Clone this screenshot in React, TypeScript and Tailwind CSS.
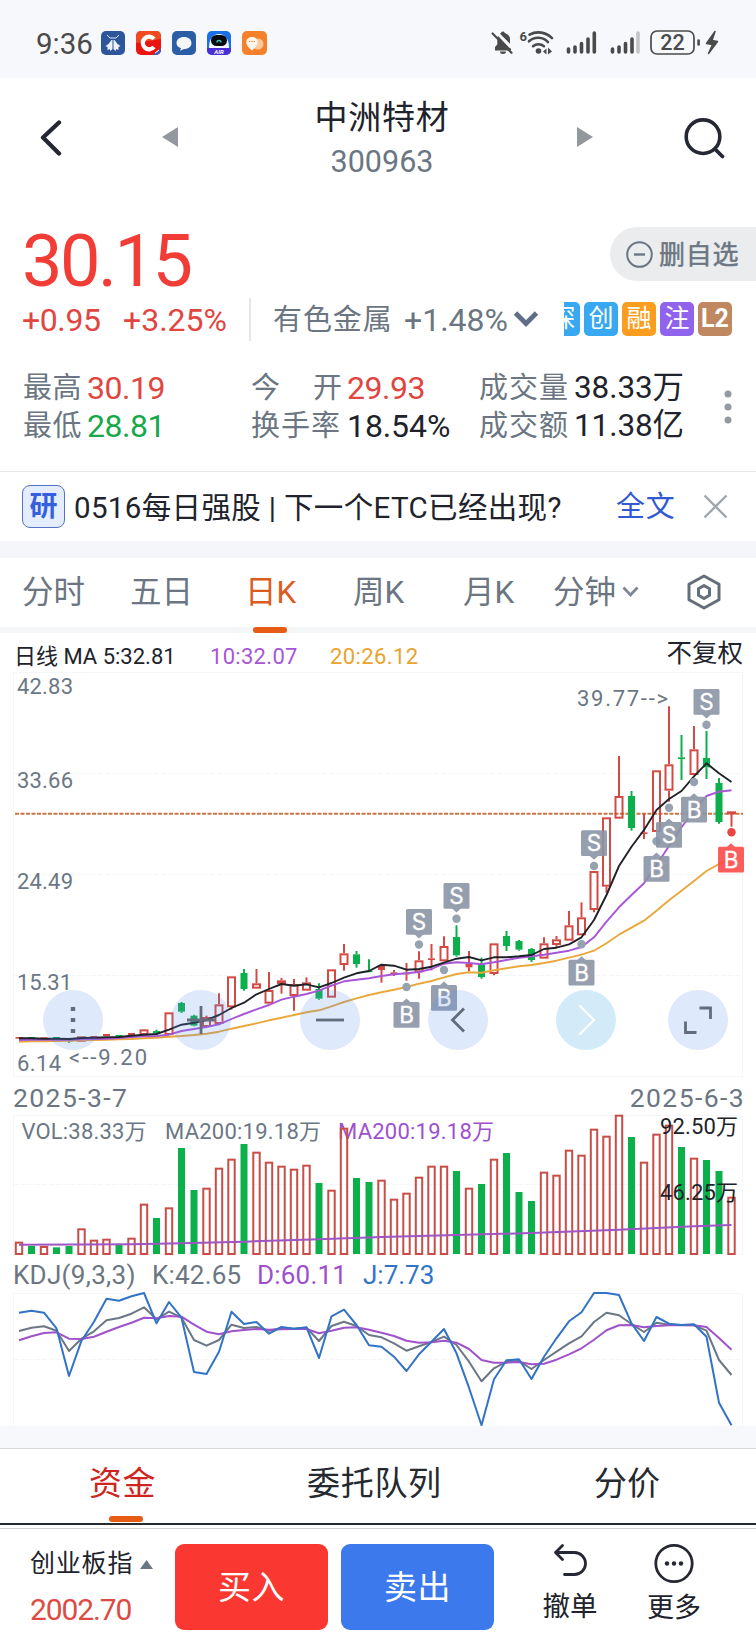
import React from "react";

const FIRST_X = 19;
const STEP = 12.5;
const RED = "#d24a43";
const GREEN = "#0bb04a";
const xAt = (i: number) => FIRST_X + STEP * i;

// index: colour, body top, body bottom, high, low (thirds of a pixel below the price axis origin)
type Candle = ["r" | "g" | "f", number, number, number, number];
const candles: Candle[] = [
  ["f", 1131, 1136, 1131, 1136], ["g", 1131, 1135, 1131, 1135], ["f", 1132, 1136, 1132, 1136], ["g", 1131, 1135, 1131, 1135],
  ["g", 1138, 1144, 1138, 1148], ["r", 1129, 1145, 1129, 1145], ["f", 1128, 1133, 1128, 1133], ["f", 1122, 1128, 1122, 1128],
  ["g", 1125, 1130, 1125, 1130], ["f", 1119, 1126, 1119, 1126], ["r", 1108, 1125, 1108, 1125], ["g", 1113, 1121, 1109, 1125],
  ["r", 1057, 1125, 1057, 1125], ["g", 1029, 1055, 1026, 1059], ["g", 1067, 1097, 1064, 1099], ["r", 1071, 1101, 1067, 1101],
  ["r", 1033, 1092, 1000, 1092], ["r", 949, 1042, 949, 1049], ["g", 939, 987, 927, 992], ["r", 970, 986, 927, 986],
  ["r", 990, 1031, 936, 1031], ["r", 961, 972, 954, 1001], ["r", 972, 1008, 957, 1052], ["r", 967, 992, 952, 992],
  ["g", 987, 1016, 970, 1019], ["r", 928, 1013, 928, 1013], ["r", 880, 915, 852, 932], ["g", 883, 912, 873, 923],
  ["g", 932, 936, 898, 936], ["f", 916, 930, 914, 968], ["f", 937, 943, 930, 948], ["f", 938, 943, 909, 962],
  ["r", 901, 937, 874, 956], ["f", 895, 900, 852, 931], ["r", 858, 904, 829, 904], ["g", 831, 886, 796, 890],
  ["f", 912, 922, 873, 934], ["g", 914, 951, 893, 956], ["r", 850, 942, 850, 946], ["g", 828, 858, 813, 873],
  ["g", 843, 869, 840, 872], ["g", 867, 900, 864, 906], ["r", 850, 896, 832, 896], ["r", 838, 855, 828, 862],
  ["r", 796, 842, 753, 842], ["r", 772, 826, 727, 826], ["r", 633, 750, 633, 757], ["r", 472, 680, 472, 698],
  ["r", 408, 476, 288, 476], ["g", 408, 504, 393, 512], ["f", 517, 522, 461, 537], ["r", 331, 516, 331, 516],
  ["r", 313, 392, 139, 425], ["g", 292, 297, 225, 360], ["r", 268, 345, 198, 345], ["g", 294, 322, 213, 357],
  ["g", 369, 486, 354, 491], ["f", 454, 463, 454, 500],
];

const ma5 = [1135, 1135, 1136, 1136, 1137, 1134, 1133, 1132, 1131, 1127, 1124, 1122, 1109, 1094, 1088, 1080, 1065, 1044, 1028, 1003, 987, 972, 977, 973, 982, 969, 953, 940, 933, 914, 917, 929, 927, 920, 908, 896, 891, 901, 892, 892, 889, 885, 867, 863, 853, 832, 780, 705, 618, 560, 510, 450, 417, 393, 349, 310, 340, 366];
const ma10 = [1140, 1139, 1139, 1139, 1139, 1138, 1137, 1136, 1134, 1131, 1129, 1128, 1124, 1113, 1107, 1101, 1093, 1077, 1062, 1048, 1035, 1019, 1010, 1002, 992, 977, 964, 959, 955, 948, 943, 940, 936, 927, 911, 907, 909, 913, 907, 900, 893, 889, 884, 878, 872, 861, 832, 785, 742, 705, 670, 615, 558, 502, 452, 408, 395, 391];
const ma20 = [1145, 1144, 1144, 1143, 1142, 1141, 1140, 1139, 1138, 1137, 1135, 1133, 1130, 1128, 1125, 1121, 1115, 1106, 1098, 1090, 1081, 1073, 1065, 1057, 1051, 1039, 1026, 1015, 1005, 997, 989, 981, 971, 963, 952, 942, 937, 938, 931, 925, 919, 915, 909, 902, 893, 884, 872, 850, 824, 803, 782, 752, 721, 692, 663, 633, 612, 598];

const volume = [455, 468, 468, 472, 468, 415, 449, 446, 462, 443, 341, 384, 352, 174, 300, 293, 233, 206, 162, 185, 215, 227, 236, 224, 279, 299, 113, 264, 276, 269, 326, 308, 260, 227, 227, 243, 293, 282, 206, 189, 306, 333, 245, 254, 179, 194, 116, 137, 74, 141, 215, 131, 104, 171, 203, 210, 243, 320];
const greens = [1, 3, 4, 8, 11, 13, 14, 18, 24, 27, 28, 35, 37, 39, 40, 41, 49, 53, 55, 56];

const lineJ = [668, 662, 668, 715, 858, 752, 695, 626, 632, 619, 609, 700, 636, 683, 846, 852, 785, 665, 702, 696, 731, 711, 716, 712, 804, 679, 659, 705, 766, 770, 800, 843, 793, 755, 717, 790, 893, 1006, 868, 811, 808, 867, 800, 745, 694, 667, 609, 609, 615, 700, 753, 681, 701, 705, 703, 740, 938, 1006];
const lineK = [723, 713, 709, 722, 783, 746, 724, 691, 684, 671, 652, 688, 665, 683, 750, 767, 750, 704, 714, 711, 722, 714, 716, 713, 753, 708, 695, 708, 735, 742, 760, 782, 769, 756, 740, 765, 815, 874, 835, 815, 813, 837, 810, 785, 760, 739, 696, 668, 676, 702, 726, 698, 704, 705, 706, 722, 810, 855];
const lineD = [751, 739, 729, 727, 746, 747, 740, 725, 711, 698, 683, 685, 678, 680, 704, 725, 733, 724, 720, 717, 719, 718, 717, 717, 730, 722, 713, 712, 719, 728, 738, 752, 758, 757, 752, 758, 777, 810, 818, 818, 816, 823, 821, 809, 793, 775, 749, 721, 706, 705, 712, 708, 706, 706, 706, 711, 744, 779];

const poly = (values: number[], base: number) =>
  values.map((v, i) => `${xAt(i)},${(base + v / 3).toFixed(1)}`).join(" ");

const markers: { i: number; t: "S" | "B"; box: number; dot: number; hot?: boolean }[] = [
  { i: 32, t: "S", box: 909, dot: 944.5 },
  { i: 35, t: "S", box: 883, dot: 918.7 },
  { i: 46, t: "S", box: 830.3, dot: 866 },
  { i: 55, t: "S", box: 689, dot: 724.7 },
  { i: 31, t: "B", box: 1002, dot: 987 },
  { i: 34, t: "B", box: 985, dot: 970 },
  { i: 45, t: "B", box: 959.7, dot: 944.3 },
  { i: 51, t: "B", box: 856, dot: 841.3 },
  { i: 52, t: "S", box: 822, dot: 807.7 },
  { i: 54, t: "B", box: 796.7, dot: 782 },
  { i: 57, t: "B", box: 846.7, dot: 832.3, hot: true },
];

function Label({ x, y, w, fill = "#6b7785", children }: { x: number; y: number; w: number; fill?: string; children: string }) {
  return (
    <text x={x} y={y} textLength={w} lengthAdjust="spacing" fontSize="22" fill={fill}>
      {children}
    </text>
  );
}

function PriceChart() {
  return (
    <svg className="block" width="756" height="405" viewBox="0 672 756 405">
      <rect x="13.5" y="672.5" width="729" height="404" fill="none" stroke="#f5f6f7" />
      {[773.5, 874.5, 975.5].map((y) => (
        <line key={y} x1="14" x2="742" y1={y} y2={y} stroke="#f5f6f7" strokeDasharray="5 2" />
      ))}
      <line x1="15" x2="743" y1="813.8" y2="813.8" stroke="#cb7444" strokeWidth="2" strokeDasharray="4 1.5" />
      {candles.map(([c, top, bottom, high, low], i) => {
        const x = xAt(i);
        const t = 660 + top / 3;
        const b = 660 + bottom / 3;
        const last = i === candles.length - 1;
        const half = last ? 4.5 : 3.5;
        const color = c === "g" ? GREEN : RED;
        return (
          <g key={i} stroke={color} strokeWidth="2">
            {high < top && <line x1={x} x2={x} y1={660 + high / 3} y2={t} />}
            {low > bottom && <line x1={x} x2={x} y1={b} y2={660 + low / 3} />}
            {c === "r" ? (
              <rect x={x - 3.5} y={t + 1} width="7" height={Math.max(1, b - t - 2)} fill="none" />
            ) : (
              <rect x={x - half} y={t} width={half * 2} height={Math.max(1.6, b - t)} fill={color} stroke="none" />
            )}
          </g>
        );
      })}
      <g fill="none" strokeWidth="1.9" strokeLinejoin="round">
        <polyline points={poly(ma20, 660)} stroke="#e9a83a" />
        <polyline points={poly(ma10, 660)} stroke="#a855d8" />
        <polyline points={poly(ma5, 660)} stroke="#20222a" />
      </g>
      {markers.map(({ i, t, box, dot, hot }) => {
        const x = xAt(i);
        const cx = hot ? 731 : x;
        const tip = dot > box ? box + 29.5 : box - 3.5;
        const edge = dot > box ? box + 25 : box + 1;
        const fill = hot ? "#fb4c4c" : "#8a95a6";
        return (
          <g key={i}>
            <circle cx={x} cy={dot} r="4.2" fill={hot ? "#e94440" : "#97a2b1"} />
            <g opacity="0.9" fill={fill}>
              <path d={`M${cx - 5} ${edge}L${cx} ${tip}L${cx + 5} ${edge}z`} />
              <rect x={cx - 13} y={box} width="26" height="25.8" rx="1.5" />
            </g>
            <text x={cx} y={box + 20.8} fontSize="22.500" fontFamily="Inter" textAnchor="middle" fill="#fff" stroke="#fff" strokeWidth="0.3">
              {t}
            </text>
          </g>
        );
      })}
      <Label x={17} y={694} w={56}>42.83</Label>
      <Label x={17} y={787.5} w={56}>33.66</Label>
      <Label x={17} y={889} w={56}>24.49</Label>
      <Label x={17} y={990} w={55}>15.31</Label>
      <Label x={17} y={1071} w={44}>6.14</Label>
      <Label x={577} y={706} w={91}>39.77--&gt;</Label>
      <Label x={69} y={1065} w={78}>&lt;--9.20</Label>
      <g fill="#5b92f0" fillOpacity="0.2">
        <circle cx="73" cy="1020" r="30" />
        <circle cx="201" cy="1020" r="30" />
        <circle cx="330" cy="1020" r="30" />
        <circle cx="458" cy="1020" r="30" />
        <circle cx="586" cy="1020" r="30" fill="#2299e0" />
        <circle cx="698" cy="1020" r="30" />
      </g>
      <g fill="none" stroke="#636c7a" strokeWidth="2.8">
        <path d="M73 1007v4M73 1018v4M73 1029v4" strokeWidth="4.4" />
        <path d="M201 1006v28M187 1020h28" />
        <path d="M316 1020h28" />
        <path d="M464 1008.5l-11.5 11.5l11.5 11.5" />
        <path d="M579.5 1005.5l14.5 14.5l-14.5 14.5" stroke="#fff" strokeWidth="2" />
        <path d="M699.5 1008h11v11M685.500 1021.500v11h11" />
      </g>
    </svg>
  );
}

function VolumeChart() {
  return (
    <svg className="block" width="756" height="143" viewBox="0 1113 756 143">
      <path d="M13.500 1115.500H742.500V1254.500H13.500z" fill="none" stroke="#f5f6f7" />
      <line x1="14" x2="742" y1="1184.500" y2="1184.500" stroke="#f5f6f7" strokeDasharray="5 2" />
      <Label x={21.5} y={1139} w={125}>VOL:38.33万</Label>
      <Label x={165} y={1139} w={156}>MA200:19.18万</Label>
      <Label x={338} y={1139} w={156} fill="#a04fcf">MA200:19.18万</Label>
      {volume.map((v, i) => {
        const x = xAt(i);
        const top = 1090 + v / 3;
        return greens.includes(i) ? (
          <rect key={i} x={x - 3.5} y={top} width="7" height={1254 - top} fill={GREEN} />
        ) : (
          <rect key={i} x={x - 3.2} y={top + 1} width="6.4" height={1253 - top} fill="none" stroke="#c84d46" strokeWidth="2" />
        );
      })}
      <polyline
        fill="none"
        stroke="#a055c4"
        strokeWidth="2"
        points={[[0, 464], [9, 463], [13, 460], [18, 455], [24, 448], [29, 441], [35, 435], [41, 429], [48, 419], [54, 409], [57, 405]]
          .map(([i, v]) => `${xAt(i)},${1090 + v / 3}`)
          .join(" ")}
      />
      <Label x={660} y={1134} w={78} fill="#20222a">92.50万</Label>
      <Label x={660} y={1200} w={78} fill="#20222a">46.25万</Label>
    </svg>
  );
}

function KdjChart() {
  return (
    <svg className="block" width="756" height="134" viewBox="0 1292 756 134">
      <path d="M13.500 1425.500V1293.500H742.500V1425.500" fill="none" stroke="#f5f6f7" />
      <line x1="14" x2="742" y1="1359.500" y2="1359.500" stroke="#f5f6f7" strokeDasharray="5 2" />
      <g fill="none" strokeWidth="2" strokeLinejoin="round">
        <polyline points={poly(lineK, 1090)} stroke="#6b7785" />
        <polyline points={poly(lineD, 1090)} stroke="#a052cb" />
        <polyline points={poly(lineJ, 1090)} stroke="#3273c6" />
      </g>
    </svg>
  );
}

function StatusBar() {
  return (
    <header className="flex h-[78px] items-center bg-[#f7f8fb] pt-2 pl-[36px] text-[#4a4a4a]">
      <span className="w-[65px] pt-0.5 text-[29.500px]">9:36</span>
      <div className="flex gap-[11px]">
        <svg width="24" height="24" viewBox="0 0 24 24">
          <rect width="24" height="24" rx="5" fill="#2c559c" />
          <path d="M6 4l3 3h6l3-3" stroke="#dce6f5" fill="none" strokeWidth="1" />
          <path d="M11.500 9v9l-2 2l-1-2l-2 1v-3l-2-1l3-2l3-4zM12.500 9v9l2 2l1-2l2 1v-3l2-1l-3-2l-3-4z" fill="#eef3fb" />
        </svg>
        <svg width="25" height="24" viewBox="0 0 25 24">
          <rect width="25" height="24" rx="5" fill="#ea1410" />
          <path d="M0 12V5a5 5 0 0 1 5-5h15a5 5 0 0 1 5 5v3z" fill="#f04a20" />
          <path d="M18 8a6.300 6.300 0 1 0 0 8" stroke="#fff" strokeWidth="4.200" fill="none" />
          <path d="M25 17v2a5 5 0 0 1-5 5h-3z" fill="#3c62c4" />
          <path d="M19 22l4-3" stroke="#fff" />
        </svg>
        <svg width="24" height="24" viewBox="0 0 24 24">
          <rect width="24" height="24" rx="5" fill="#2c5ea6" />
          <path d="M12 6c4.500 0 7.500 2.600 7.500 6s-3 6-7.500 6l-4 1.800l1-2.500C6 16.200 4.500 14.400 4.500 12c0-3.400 3-6 7.500-6z" fill="#f3f5f7" />
        </svg>
        <svg width="24" height="24" viewBox="0 0 24 24">
          <rect width="24" height="24" rx="5" fill="#1b6fe8" />
          <path d="M0 17h24v2a5 5 0 0 1-5 5H5a5 5 0 0 1-5-5z" fill="#4a2fd8" />
          <path d="M2 17C2 8 6 3 12 3s10 5 10 14z" fill="#f4f7fb" />
          <rect x="4" y="4" width="16" height="11" rx="5.500" fill="#06090f" />
          <path d="M10 11.500a2 2 0 0 1 4 0" stroke="#2dd4bf" fill="none" strokeWidth="1.300" />
          <text x="12" y="23" fontSize="6" fontWeight="700" fontStyle="italic" textAnchor="middle" fill="#fff">AIR</text>
        </svg>
        <svg width="25" height="24" viewBox="0 0 25 24">
          <rect width="25" height="24" rx="5" fill="#f5802a" />
          <circle cx="16" cy="13" r="5.500" fill="#fbc79b" />
          <path d="M10 6c3.500 0 5.700 2.200 5.700 5.200c0 3.300-3 5.800-5.700 8.300c-2.700-2.500-5.700-5-5.700-8.300C4.300 8.200 6.500 6 10 6z" fill="#fff4ea" />
          <path d="M7 10.500h6" stroke="#f5802a" strokeDasharray="1.300 1" />
        </svg>
      </div>
      <svg className="ml-[221px]" width="232" height="28" viewBox="488 29 232 28">
        <g fill="#4a4a4a">
          <path d="M495 49v-2l2.300-2.600V39a6 6 0 0 1 .8-3L511 49.500zM500 33.700a3 3 0 0 1 1-.7a2 2 0 0 1 3.800 0c3.200.9 5.200 3.300 5.200 6.500v4.200z" />
          <path d="M495 48.500h16v2h-16zM500 51.500h6a3 2.500 0 0 1-6 0z" />
          <path d="M492.600 33.500L511.500 52.800" stroke="#4a4a4a" strokeWidth="2.200" strokeLinecap="round" />
          <text x="519.500" y="41" fontSize="13" fontWeight="700">6</text>
          <circle cx="538.500" cy="51" r="2.800" />
          <path d="M543 51.500l3.500-3v6zM552 51.500l-4-4v7z" />
        </g>
        <g fill="none" stroke="#4a4a4a" strokeWidth="2.600" strokeLinecap="round">
          <path d="M529.500 34.600a19 19 0 0 1 22.500 3.500" />
          <path d="M529 41.300a13.500 13.500 0 0 1 19 .8" />
          <path d="M533 46.200a8.500 8.500 0 0 1 11 0" />
        </g>
        <g stroke="#4a4a4a" strokeWidth="3.600" strokeLinecap="round">
          <path d="M568.500 49v3M575 47v5M581.500 43.500v8.500M588 39v13M594.300 33v19" />
          <path d="M612.500 49v3M619 47v5M625.500 43.500v8.500M632 39v13" />
          <path d="M638 33v19" stroke="#c4c4c6" />
          <path d="M698.600 40.500v4" strokeWidth="2.600" />
        </g>
        <rect x="651" y="31" width="43" height="23" rx="6" fill="none" stroke="#4a4a4a" strokeWidth="1.700" />
        <text x="672.500" y="50" fontSize="21.500" fontWeight="500" textAnchor="middle" fill="#4a4a4a">22</text>
        <path d="M715 31.500L706.500 43.500l6 1L708.500 53.500L717.500 41.500l-5.500-1z" fill="#4a4a4a" stroke="#4a4a4a" strokeWidth="1.500" strokeLinejoin="round" />
      </svg>
    </header>
  );
}

function TitleBar() {
  return (
    <div className="flex h-[132px] items-start">
      <svg className="mt-[40px] ml-[38px]" width="26" height="38" viewBox="38 118 26 38">
        <path d="M59 122.500L43 137.500L59 153.500" fill="none" stroke="#252832" strokeWidth="4.300" strokeLinecap="round" strokeLinejoin="round" />
      </svg>
      <svg className="mt-[49px] ml-[98px]" width="16" height="20" viewBox="0 0 16 20">
        <path d="M16 0v20L0 10z" fill="#93989e" />
      </svg>
      <div className="ml-[130px] flex w-[148px] flex-col items-center">
        <h1 className="mt-[20px] h-[40px] text-[33px] leading-[40px] tracking-[0.700px] text-[#20232b]">中洲特材</h1>
        <span className="mt-[4px] text-[30.500px] leading-[40px] text-[#6b7682]">300963</span>
      </div>
      <svg className="mt-[49px] ml-[121px]" width="16" height="20" viewBox="0 0 16 20">
        <path d="M0 0v20L16 10z" fill="#93989e" />
      </svg>
      <svg className="mt-[38px] ml-[89px]" width="46" height="46" viewBox="682 116 46 46">
        <circle cx="703" cy="136.700" r="16.800" fill="none" stroke="#252832" strokeWidth="3.600" />
        <path d="M715 149l7.500 7.500" stroke="#252832" strokeWidth="3.800" strokeLinecap="round" />
      </svg>
    </div>
  );
}

function Badge({ className, children }: { className: string; children: string }) {
  return (
    <span className={`flex h-[34px] w-[34px] shrink-0 items-center justify-center rounded-[5px] text-[25px] leading-[34px] text-white ${className}`}>
      {children}
    </span>
  );
}

function Quote() {
  return (
    <section className="h-[262px] border-b border-[#e6e7e9] text-[#6b7682]">
      <div className="flex h-[84px] justify-between">
        <span className="pl-[22px] text-[72px] leading-[103px] tracking-[-2.500px] text-[#f23c36]">30.15</span>
        <div className="mt-[17px] flex h-[54px] w-[146px] items-center rounded-l-full bg-[#ebecee] pl-[16px]">
          <svg width="27" height="27" viewBox="0 0 27 27">
            <circle cx="13.500" cy="13.500" r="12.300" fill="none" stroke="#6b7682" strokeWidth="2" />
            <path d="M8 13.500h11" stroke="#6b7682" strokeWidth="2.400" />
          </svg>
          <span className="ml-[6px] pt-0.5 text-[26px] tracking-[0.700px] [-webkit-text-stroke:0.5px_#6b7682]">删自选</span>
        </div>
      </div>
      <div className="flex h-[50px] items-center text-[32px]">
        <span className="w-[101px] pt-0.5 pl-[22px] tracking-[-0.400px] text-[#e0463f]">+0.95</span>
        <span className="ml-[22px] w-[126px] pt-0.5 text-[#e0463f]">+3.25%</span>
        <span className="h-[43px] w-[2px] bg-[#e6e7e9]" />
        <span className="ml-[22px] w-[131px] pt-[3px] text-[29px] tracking-[0.900px]">有色金属</span>
        <span className="w-[109px] pt-0.5">+1.48%</span>
        <svg width="26" height="18" viewBox="0 0 26 18">
          <path d="M2.500 3L13 13.500L23.500 3" fill="none" stroke="#5f6f86" strokeWidth="4.800" />
        </svg>
        <div className="ml-[25px] flex w-[168px] justify-end gap-1 overflow-hidden">
          <Badge className="bg-[#38a8f0]">深</Badge>
          <Badge className="bg-[#38a8f0]">创</Badge>
          <Badge className="bg-[#fb9e20]">融</Badge>
          <Badge className="bg-[#8f63ec]">注</Badge>
          <Badge className="bg-[#c08860] font-bold">L2</Badge>
        </div>
      </div>
      <div className="mt-[25px] flex items-center">
        <div className="grid grid-cols-[64px_164px_96px_132px_95px_130px] pl-[23px] text-[29px] leading-[38px] whitespace-nowrap">
          <span className="tracking-[0.500px]">最高</span>
          <span className="text-[32px] tracking-[-0.500px] text-[#e0463f]">30.19</span>
          <span className="flex w-[91px] justify-between"><span>今</span><span>开</span></span>
          <span className="text-[32px] tracking-[-0.500px] text-[#e0463f]">29.93</span>
          <span className="tracking-[1px]">成交量</span>
          <span className="text-[31.500px] tracking-[-0.100px] text-[#20232b]">38.33万</span>
          <span className="tracking-[0.500px]">最低</span>
          <span className="text-[32px] tracking-[-0.500px] text-[#17a84a]">28.81</span>
          <span className="tracking-[1px]">换手率</span>
          <span className="text-[32px] tracking-[-0.100px] text-[#20232b]">18.54%</span>
          <span className="tracking-[1px]">成交额</span>
          <span className="text-[31.500px] tracking-[-0.100px] text-[#20232b]">11.38亿</span>
        </div>
        <svg className="ml-[19px]" width="10" height="36" viewBox="0 0 10 36">
          <g fill="#949a9f">
            <circle cx="5" cy="5" r="3.500" />
            <circle cx="5" cy="18" r="3.500" />
            <circle cx="5" cy="31" r="3.500" />
          </g>
        </svg>
      </div>
    </section>
  );
}

function NewsRow() {
  return (
    <section className="flex h-[69px] items-center pl-[22px]">
      <span className="flex h-[43px] w-[43px] items-center justify-center rounded-[8px] border border-[#5272c4] bg-[#e4edfd] text-[28px] font-bold text-[#365fe0]">研</span>
      <span className="ml-[9px] w-[542px] pt-[3px] text-[29.500px] tracking-[0.350px] whitespace-nowrap text-[#20232b]">0516每日强股 | 下一个ETC已经出现?</span>
      <span className="pt-[3px] text-[29px] tracking-[0.800px] text-[#3059d2]">全文</span>
      <svg className="ml-[27px]" width="25" height="25" viewBox="0 0 25 25">
        <path d="M1.500 1.500l22 22M23.500 1.500l-22 22" stroke="#a0a6ae" strokeWidth="2.400" />
      </svg>
    </section>
  );
}

function Periods() {
  return (
    <nav className="flex h-[75px] border-b-[6px] border-[#f5f6f8] pl-[22px] text-[31.500px] leading-[70px] text-[#6b7682]">
      <span className="w-[108px]">分时</span>
      <span className="w-[115px]">五日</span>
      <span className="flex h-[75px] w-[108px] flex-col text-[#dc5c20]">
        <span className="h-[69px]">日K</span>
        <span className="ml-[8px] h-[6px] w-[34px] rounded-full bg-[#e75c14]" />
      </span>
      <span className="w-[110px]">周K</span>
      <span className="w-[90px]">月K</span>
      <span>分钟</span>
      <svg className="mt-[27px] ml-[6px]" width="17" height="14" viewBox="0 0 17 14">
        <path d="M1.500 2.500l7 7.500l7-7.500" fill="none" stroke="#7f8995" strokeWidth="2.800" />
      </svg>
      <svg className="mt-[16px] ml-[47px]" width="36" height="36" viewBox="0 0 36 36">
        <path d="M18 2l15 8.200v15.600L18 34L3 25.800V10.200z" fill="none" stroke="#646e7b" strokeWidth="3" strokeLinejoin="round" />
        <path d="M18 11.500l5.500 3.200v6.600L18 24.500l-5.500-3.200v-6.600z" fill="none" stroke="#646e7b" strokeWidth="3" strokeLinejoin="round" />
      </svg>
    </nav>
  );
}

function BottomBar() {
  return (
    <footer className="flex h-[104px] border-t border-[#cfd1d5] text-[#20232b]">
      <div className="w-[175px] pt-[15px] pl-[30px]">
        <div className="flex h-[40px] items-center gap-[7px]">
          <span className="text-[25px] leading-[40px] tracking-[0.800px]">创业板指</span>
          <svg width="13" height="9" viewBox="0 0 13 9">
            <path d="M6.500 0L13 9H0z" fill="#6b7682" />
          </svg>
        </div>
        <div className="mt-[6px] text-[30px] leading-[40px] tracking-[-1.100px] text-[#dc4c45]">2002.70</div>
      </div>
      <button className="mt-[15px] h-[86px] w-[153px] rounded-[9px] bg-[#fa3731] pt-0.5 text-[33px] tracking-[0.500px] text-white">买入</button>
      <button className="mt-[15px] ml-[13px] h-[86px] w-[153px] rounded-[9px] bg-[#3c79ec] pt-0.5 text-[33px] tracking-[0.500px] text-white">卖出</button>
      <div className="ml-[36px] flex w-[80px] flex-col items-center">
        <svg className="mt-[13px]" width="40" height="38" viewBox="551 1543 40 38">
          <path d="M563.500 1546.500L556.500 1553.500L563.500 1560.500M556.500 1553.500H575.500a11 11 0 0 1 0 22H565.500" fill="none" stroke="#252832" strokeWidth="2.800" strokeLinecap="round" strokeLinejoin="round" />
        </svg>
        <span className="mt-[7px] text-[27.500px] leading-[40px]">撤单</span>
      </div>
      <div className="ml-[24px] flex w-[80px] flex-col items-center">
        <svg className="mt-[14px]" width="42" height="42" viewBox="0 0 42 42">
          <circle cx="21" cy="20.500" r="18.200" fill="none" stroke="#252832" strokeWidth="2.800" />
          <circle cx="14" cy="20.500" r="2.200" fill="#252832" />
          <circle cx="21" cy="20.500" r="2.200" fill="#252832" />
          <circle cx="28" cy="20.500" r="2.200" fill="#252832" />
        </svg>
        <span className="mt-[3px] text-[27px] leading-[40px]">更多</span>
      </div>
    </footer>
  );
}

export default function App() {
  return (
    <main className="h-[1632px] w-[756px] overflow-hidden bg-white font-[Roboto,'Noto_Sans_CJK_SC',sans-serif]">
      <StatusBar />
      <TitleBar />
      <Quote />
      <NewsRow />
      <div className="h-[17px] bg-[#f5f6f9]" />
      <Periods />
      <div className="flex h-[39px] items-center pt-2 pl-[14px] text-[22px] text-[#20232b]">
        <span className="w-[196px]">日线 MA 5:32.81</span>
        <span className="w-[120px] tracking-[0.300px] text-[#a855d8]">10:32.07</span>
        <span className="tracking-[0.400px] text-[#e9a32e]">20:26.12</span>
        <span className="mt-[-7px] mr-[13px] ml-auto text-[25.500px]">不复权</span>
      </div>
      <PriceChart />
      <div className="flex h-[36px] items-center justify-between pt-1.5 pr-[11px] pl-[13px] text-[26.500px] tracking-[1.400px] text-[#6b7682]">
        <span>2025-3-7</span>
        <span>2025-6-3</span>
      </div>
      <VolumeChart />
      <div className="flex h-[36px] items-center pt-0.5 text-[26px] text-[#6b7682]">
        <span className="w-[152px] pl-[13px] tracking-[0.300px]">KDJ(9,3,3)</span>
        <span className="w-[105px] tracking-[0.200px]">K:42.65</span>
        <span className="w-[106px] tracking-[0.200px] text-[#a04fcb]">D:60.11</span>
        <span className="text-[#3273c6]">J:7.73</span>
      </div>
      <KdjChart />
      <div className="h-[22px] bg-[#f7f8fb]" />
      <nav className="flex h-[80px] border-t border-[#d4d6da] text-[33px] leading-[70px] text-[#252930]">
        <div className="flex h-[76px] w-full border-b-2 border-[#252930]">
          <span className="flex w-[307px] flex-col pl-[89px] tracking-[0.500px] text-[#d02420]">
            <span className="h-[67px]">资金</span>
            <span className="ml-[20px] h-[6px] w-[34px] shrink-0 rounded-full bg-[#e75c14]" />
          </span>
          <span className="w-[287px] tracking-[0.700px]">委托队列</span>
          <span>分价</span>
        </div>
      </nav>
      <BottomBar />
    </main>
  );
}
